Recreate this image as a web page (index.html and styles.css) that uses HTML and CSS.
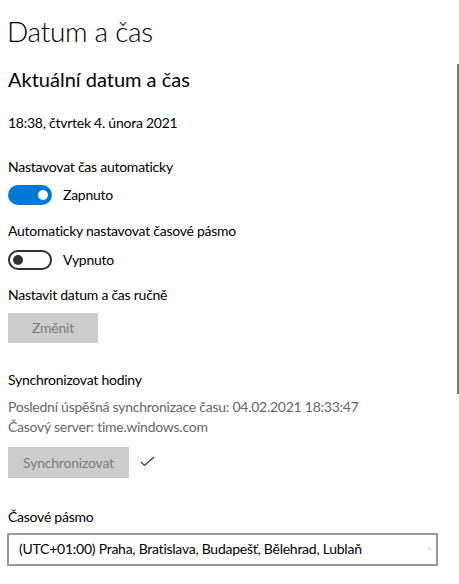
FILE: index.html
```html
<!DOCTYPE html>
<html lang="cs">
<head>
<meta charset="utf-8">
<title>Datum a čas</title>
<link rel="stylesheet" href="styles.css">
</head>
<body>
<div class="page">
  <h1 class="title">Datum a čas</h1>
  <h2 class="subtitle">Aktuální datum a čas</h2>
  <p class="text date">18:38, čtvrtek 4. února 2021</p>

  <p class="text label l1">Nastavovat čas automaticky</p>
  <div class="toggle-row">
    <span class="toggle on"><span class="knob"></span></span>
    <span class="text">Zapnuto</span>
  </div>

  <p class="text label l2">Automaticky nastavovat časové pásmo</p>
  <div class="toggle-row">
    <span class="toggle off"><span class="knob"></span></span>
    <span class="text">Vypnuto</span>
  </div>

  <p class="text label l3">Nastavit datum a čas ručně</p>
  <div class="btn-row"><span class="btn btn-change">Změnit</span></div>

  <p class="text label l4">Synchronizovat hodiny</p>
  <p class="text muted m1">Poslední úspěšná synchronizace času: 04.02.2021 18:33:47</p>
  <p class="text muted">Časový server: time.windows.com</p>
  <div class="btn-row sync-row">
    <span class="btn btn-sync">Synchronizovat</span>
    <svg class="check" width="15" height="11" viewBox="0 0 15 11"><polyline points="1,6 4.5,9.5 14,1" fill="none" stroke="#333" stroke-width="1.1"/></svg>
  </div>

  <p class="text label l5">Časové pásmo</p>
  <div class="select">
    <span class="text">(UTC+01:00) Praha, Bratislava, Budapešť, Bělehrad, Lublaň</span>
    <svg class="chev" width="6" height="5" viewBox="0 0 6 5"><polyline points="0.5,0.5 3,3.5" fill="none" stroke="#aaa" stroke-width="1"/></svg>
  </div>
</div>
<div class="scrollbar"></div>
</body>
</html>
```

FILE: styles.css
```css
html, body {
  margin: 0;
  padding: 0;
  background: #ffffff;
}

body {
  font-family: "Lato", "Noto Sans", sans-serif;
  color: #000000;
  overflow: hidden;
}

.page {
  padding: 12px 0 0 8px;
  width: 430px;
}

.title {
  margin: 0 0 0 -1px;
  font-family: "Lato", sans-serif;
  font-weight: 300;
  font-size: 28px;
  line-height: 38px;
  letter-spacing: -0.3px;
}

.subtitle {
  margin: 15px 0 0 0;
  font-weight: 400;
  font-size: 20px;
  line-height: 28px;
}

.text {
  margin: 0;
  font-size: 14px;
  line-height: 20px;
  letter-spacing: -0.25px;
}

.date { margin-top: 20px; }
.l1 { margin-top: 24px; }
.l2 { margin-top: 16px; }
.l3 { margin-top: 15px; }
.l4 { margin-top: 27px; }
.l5 { margin-top: 29px; }

.muted { color: #666666; }
.m1 { margin-top: 7px; }

.toggle-row {
  margin-top: 8px;
  display: flex;
  align-items: flex-start;
  gap: 11px;
  height: 20px;
}
.l2 + .toggle-row { margin-top: 9px; }

.toggle {
  box-sizing: border-box;
  width: 44px;
  height: 20px;
  border-radius: 10px;
  display: flex;
  align-items: center;
  padding: 0 4px;
}
.toggle .knob {
  width: 10px;
  height: 10px;
  border-radius: 50%;
}
.toggle.on {
  background: #0078d7;
  justify-content: flex-end;
}
.toggle.on .knob { background: #ffffff; }
.toggle.off {
  border: 2px solid #333333;
  padding: 0 3px;
  justify-content: flex-start;
}
.toggle.off .knob { background: #333333; }

.btn-row {
  margin-top: 8px;
  display: flex;
  align-items: center;
  gap: 11px;
}
.sync-row { margin-top: 10px; }

.btn {
  box-sizing: border-box;
  height: 30px;
  background: #cccccc;
  color: #7a7a7a;
  font-size: 14px;
  line-height: 30px;
  text-align: center;
  letter-spacing: -0.2px;
}
.btn-change { width: 90px; }
.btn-sync { width: 121px; height: 31px; line-height: 31px; }

.check { display: block; margin-top: -3px; }

.select {
  box-sizing: border-box;
  margin: 6px 0 0 -1px;
  width: 431px;
  height: 33px;
  border: 2px solid #999999;
  display: flex;
  align-items: center;
  padding: 0 0 0 10px;
}
.select .text { flex: 1; padding-bottom: 1px; }
.chev { margin-right: 2px; }

.scrollbar {
  position: absolute;
  left: 457px;
  top: 64px;
  width: 2px;
  height: 330px;
  background: #7a7a7a;
}
```
